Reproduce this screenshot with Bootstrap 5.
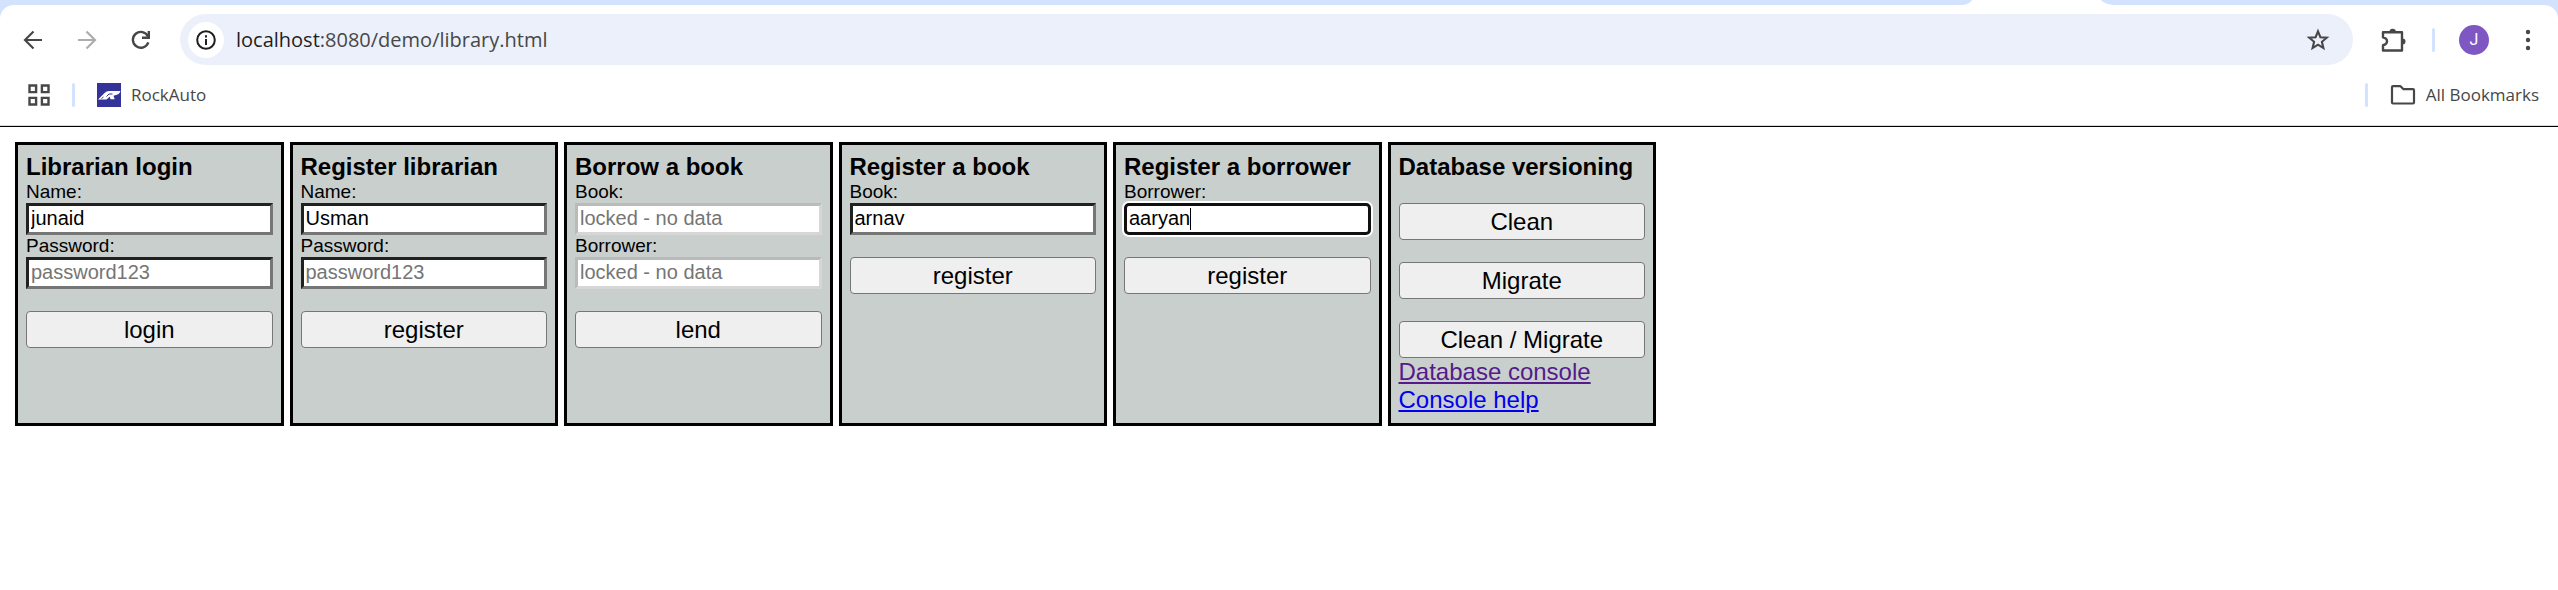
<!DOCTYPE html>
<html lang="en">
<head>
<meta charset="utf-8">
<meta name="viewport" content="width=device-width, initial-scale=1">
<title>Library</title>
<link rel="stylesheet" href="https://cdn.jsdelivr.net/npm/bootstrap@5.3.0/dist/css/bootstrap.min.css">
<script src="https://cdn.jsdelivr.net/npm/bootstrap@5.3.0/dist/js/bootstrap.bundle.min.js"></script>
<style>
body { font-family: "Liberation Sans", Arial, sans-serif; font-size: 24px; line-height: 28px; color: #000; background: #fff; }
svg { display: block; flex: none; }

/* browser frame */
.browser-top { background: #d3e3fd; }
.tab-strip { height: 5px; padding-right: 445px; }
.toolbar-area { background: #fff; border-radius: 14px 14px 0 0; padding-top: 9px; font-family: "Open Sans", "Noto Sans", sans-serif; color: #474747; }
.nav-row { height: 51px; padding: 0 15px 0 18px; }
.nav-set { gap: 24px; margin-right: 24px; }
.icon-btn { border: 0; background: none; padding: 0; width: 30px; height: 30px; color: #474747; display: flex; align-items: center; justify-content: center; flex: none; }
.icon-btn:disabled { color: #adadad; }
.omnibox { height: 51px; border-radius: 26px; background: #ecf0fa; margin-right: 25px; padding: 0 20px 0 8px; }
.site-info { width: 36px; height: 36px; border-radius: 50%; background: #fff; color: #1f1f1f; }
.address { font-size: 20px; line-height: 28px; color: #474747; margin-left: 12px; text-decoration: none; }
.address span { color: #1f1f1f; }
.rule { width: 3px; height: 24px; border-radius: 2px; background: #d3e3fd; flex: none; }
.avatar { width: 30px; height: 30px; border-radius: 50%; background: #7e57c2; color: #fff; border: 0; padding: 0; font: 16px/30px Roboto, sans-serif; flex: none; }
.bookmarks { height: 60px; gap: 22px; padding: 0 19px 0 28px; font-size: 17px; line-height: 24px; }
.bookmarks a, .bookmarks button { color: #474747; text-decoration: none; gap: 10px; }
.bookmarks button { border: 0; background: none; padding: 0; }
.page-edge { height: 2px; background: linear-gradient(#d9d9d9 50%, #000 50%); }

/* library page */
.panels { display: grid; grid-template-columns: repeat(6, minmax(0, 1fr)); gap: 6px; max-width: 1641px; margin: 15px; }
.panel { min-height: 284px; border: 3px solid #000; background: #c9cfcd; padding: 8px; }
.panel h2 { font-size: 24px; line-height: 28px; font-weight: 700; margin: 0; white-space: nowrap; }
.panel label { display: block; font-size: 19px; line-height: 22px; }
.field { display: block; width: 100%; height: 32px; border: 3px solid; border-color: #212121 #767676 #767676 #212121; background: #fff; color: #000; font-size: 20px; line-height: 24px; padding: 0 2px 2px; border-radius: 0; outline: 0; }
.field::placeholder { color: #757575; opacity: 1; }
.field:disabled { border-color: #b9bbba #d6d6d6 #d6d6d6 #b9bbba; }
.field-active { border-color: #101010; border-radius: 5px; box-shadow: 0 0 0 2px #fff; }
.caret { left: 66px; top: 5px; width: 1px; height: 22px; background: #000; }
.act { display: block; width: 100%; height: 37px; border: 1px solid #767676; border-radius: 4px; background: #efefef; color: #000; font-size: 24px; line-height: 28px; padding: 0; margin-top: 22px; }
.panel a { display: table; color: #00e; text-decoration: underline; }
.panel a.seen { color: #551a8b; }
</style>
</head>
<body>
<header class="browser-top">
  <div class="tab-strip d-flex justify-content-end">
    <svg width="150" height="5" viewBox="0 0 150 5"><path fill="#fff" d="M9 0h129q3 4 12 5H0Q7 4 9 0z"/></svg>
  </div>
  <div class="toolbar-area">
    <nav class="nav-row d-flex align-items-center" aria-label="Toolbar">
      <div class="nav-set d-flex">
        <button type="button" class="icon-btn" aria-label="Back"><svg width="20" height="20" viewBox="0 0 20 20" fill="none" stroke="currentColor" stroke-width="2.2"><path d="M19 10H2.5M10.500 1.500 2 10l8.500 8.500"/></svg></button>
        <button type="button" class="icon-btn" aria-label="Forward" disabled><svg width="20" height="20" viewBox="0 0 20 20" fill="none" stroke="currentColor" stroke-width="2.200"><path d="M1 10h16.500M9.500 1.500 18 10l-8.500 8.500"/></svg></button>
        <button type="button" class="icon-btn" aria-label="Reload"><svg width="20" height="20" viewBox="0 0 20 20" fill="none" stroke="currentColor" stroke-width="2.400"><path d="M17.300 12.300A7.900 7.900 0 1 1 17 6.500L17.500 7"/><path d="M17.800 1v6.800H11"/></svg></button>
      </div>
      <div class="omnibox d-flex align-items-center flex-grow-1">
        <button type="button" class="icon-btn site-info" aria-label="Site information"><svg width="20" height="20" viewBox="0 0 20 20" fill="none" stroke="currentColor" stroke-width="2"><circle cx="10" cy="10" r="8.800"/><path d="M10 9v6M10 5.200v2.200"/></svg></button>
        <a class="address" href="#"><span>localhost</span>:8080/demo/library.html</a>
        <button type="button" class="icon-btn ms-auto" aria-label="Bookmark this page"><svg width="24" height="24" viewBox="0 0 24 24" fill="none" stroke="currentColor" stroke-width="2.100"><path d="m12 3.300 2.400 5.900 6.400.5-4.900 4.100 1.500 6.300L12 16.700l-5.400 3.400 1.500-6.300-4.900-4.100 6.400-.5z"/></svg></button>
      </div>
      <button type="button" class="icon-btn" aria-label="Extensions"><svg width="26" height="26" viewBox="0 0 26 26" fill="none" stroke="currentColor" stroke-width="2.400" stroke-linejoin="round"><path d="M3 5.200H22v18.300H3v-5.300q4-.8 4-3.900t-4-3.900z"/><path fill="currentColor" stroke="none" d="M9.500 5a3.200 3.200 0 0 1 6.400 0zM22.500 11.500a3 3 0 0 1 0 6z"/></svg></button>
      <div class="rule mx-4"></div>
      <button type="button" class="avatar" aria-label="Profile">J</button>
      <button type="button" class="icon-btn ms-4" aria-label="Menu"><svg width="6" height="22" viewBox="0 0 6 22" fill="currentColor"><circle cx="3" cy="3" r="2.200"/><circle cx="3" cy="11" r="2.200"/><circle cx="3" cy="19" r="2.200"/></svg></button>
    </nav>
    <nav class="bookmarks d-flex align-items-center" aria-label="Bookmarks">
      <button type="button" aria-label="Apps"><svg width="22" height="22" viewBox="0 0 22 22" fill="none" stroke="currentColor" stroke-width="2.400"><path d="M1.500 1.500h6.600v6.600H1.500zM13.900 1.500h6.600v6.600h-6.600zM1.500 13.900h6.600v6.600H1.500zM13.900 13.900h6.600v6.600h-6.600z"/></svg></button>
      <div class="rule"></div>
      <a href="#" class="d-flex align-items-center"><svg width="24" height="24" viewBox="0 0 24 24"><path fill="#333399" d="M0 0h24v24H0z"/><path fill="#fff" d="M1 16.500 7.500 10Q9.500 8 12 8h11.500q-1 3.500-4.500 4l-2.500.7 1.200 3.600h-4.200l-.8-2.600-3.200 2.800z"/><path stroke="#333399" fill="none" d="M9.500 13.500 12 11h3.500M4.500 15.500l2-1.500"/></svg>RockAuto</a>
      <div class="rule ms-auto"></div>
      <button type="button" class="d-flex align-items-center"><svg width="26" height="20" viewBox="0 0 26 20" fill="none" stroke="currentColor" stroke-width="2.200" stroke-linejoin="round"><path d="M2 2.200q0-1 1-1h7.500l3 3h9.500q1 0 1 1v12.300q0 1-1 1H3q-1 0-1-1z"/></svg>All Bookmarks</button>
    </nav>
    <div class="page-edge"></div>
  </div>
</header>

<main class="panels">
  <form class="panel">
    <h2>Librarian login</h2>
    <label for="login-name">Name:</label>
    <input id="login-name" class="field" type="text" value="junaid">
    <label for="login-pass">Password:</label>
    <input id="login-pass" class="field" type="password" placeholder="password123">
    <button type="button" class="act">login</button>
  </form>
  <form class="panel">
    <h2>Register librarian</h2>
    <label for="reg-name">Name:</label>
    <input id="reg-name" class="field" type="text" value="Usman">
    <label for="reg-pass">Password:</label>
    <input id="reg-pass" class="field" type="password" placeholder="password123">
    <button type="button" class="act">register</button>
  </form>
  <form class="panel">
    <h2>Borrow a book</h2>
    <label for="lend-book">Book:</label>
    <input id="lend-book" class="field" type="text" placeholder="locked - no data" disabled>
    <label for="lend-borrower">Borrower:</label>
    <input id="lend-borrower" class="field" type="text" placeholder="locked - no data" disabled>
    <button type="button" class="act">lend</button>
  </form>
  <form class="panel">
    <h2>Register a book</h2>
    <label for="reg-book">Book:</label>
    <input id="reg-book" class="field" type="text" value="arnav">
    <button type="button" class="act">register</button>
  </form>
  <form class="panel">
    <h2>Register a borrower</h2>
    <label for="reg-borrower">Borrower:</label>
    <div class="position-relative">
      <input id="reg-borrower" class="field field-active" type="text" value="aaryan">
      <span class="caret position-absolute"></span>
    </div>
    <button type="button" class="act">register</button>
  </form>
  <section class="panel">
    <h2>Database versioning</h2>
    <button type="button" class="act">Clean</button>
    <button type="button" class="act">Migrate</button>
    <button type="button" class="act">Clean / Migrate</button>
    <a class="seen" href="#">Database console</a>
    <a href="#">Console help</a>
  </section>
</main>
</body>
</html>
